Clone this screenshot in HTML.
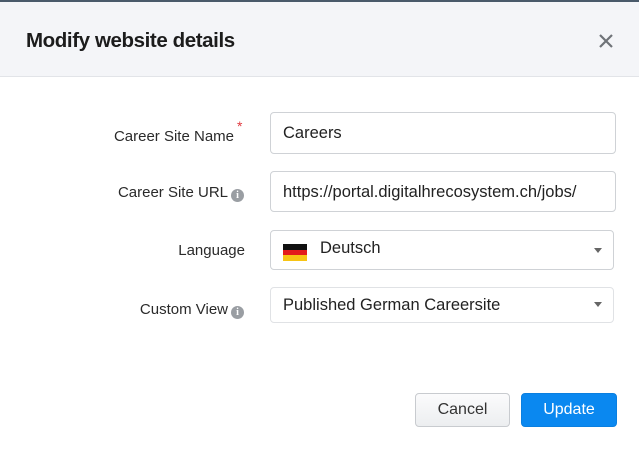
<!DOCTYPE html>
<html><head><style>
body{margin:0;width:639px;height:459px;background:#fff;font-family:"Liberation Sans",sans-serif;position:relative;overflow:hidden;color:#222}
.top{position:absolute;left:0;top:0;width:639px;height:2px;background:#4a5a6a}
.hdr{position:absolute;left:0;top:2px;width:639px;height:74px;background:#f4f5f8;border-bottom:1px solid #e2e4e8}
.title{position:absolute;left:26px;top:29px;font-size:20.5px;font-weight:bold;color:#1c1c1c;letter-spacing:-0.4px}
.x{position:absolute;left:598px;top:33px}
.lbl{position:absolute;font-size:15px;color:#2a2a2a;text-align:right}
.box{position:absolute;border:1px solid #cfd2d6;border-radius:4px;background:#fff;box-sizing:border-box;font-size:16.5px;color:#222}
.info{display:inline-block;width:13px;height:13px;border-radius:50%;background:#9a9ea3;color:#fff;font-size:10px;font-weight:bold;text-align:center;line-height:13px;vertical-align:-1px;margin-left:3px;font-family:"Liberation Serif",serif}
.arr{position:absolute;right:11px;width:0;height:0;border-left:4px solid transparent;border-right:4px solid transparent;border-top:5px solid #666}
.btn{position:absolute;top:393px;height:34px;border-radius:4px;box-sizing:border-box;font-size:16px;text-align:center;line-height:32px}
</style></head><body>
<div class="top"></div>
<div class="hdr"></div>
<div class="title">Modify website details</div>
<svg class="x" width="16" height="16" viewBox="0 0 16 16"><path d="M2 2L14 14M14 2L2 14" stroke="#6f7378" stroke-width="2.2"/></svg>

<div class="lbl" style="left:80px;top:128px;width:154px">Career Site Name</div>
<div style="position:absolute;left:237px;top:118px;color:#e0383e;font-size:14px">*</div>
<div class="box" style="left:270px;top:112px;width:346px;height:42px;padding:11px 0 0 12px">Careers</div>

<div class="lbl" style="left:60px;top:184px;width:184px">Career Site URL<span class="info">i</span></div>
<div class="box" style="left:270px;top:171px;width:346px;height:41px;padding:11px 0 0 12px">https://portal.digitalhrecosystem.ch/jobs/</div>

<div class="lbl" style="left:100px;top:242px;width:145px">Language</div>
<div class="box" style="left:270px;top:230px;width:344px;height:40px;padding:8px 0 0 49px">Deutsch
<div style="position:absolute;left:12px;top:13px;width:24px;height:17px"><div style="height:6px;background:#111"></div><div style="height:5px;background:#e31b1b"></div><div style="height:6px;background:#f7c414"></div></div>
<div class="arr" style="top:17px"></div></div>

<div class="lbl" style="left:60px;top:301px;width:184px">Custom View<span class="info">i</span></div>
<div class="box" style="left:270px;top:287px;width:344px;height:36px;padding:8px 0 0 12px;border-color:#e0e2e5">Published German Careersite
<div class="arr" style="top:14px"></div></div>

<div class="btn" style="left:415px;width:95px;border:1px solid #c8cbcf;background:linear-gradient(#fbfbfc,#eceef0);color:#333">Cancel</div>
<div class="btn" style="left:521px;width:96px;background:#0a88f0;color:#fff;border:1px solid #0a7fe0">Update</div>
</body></html>
